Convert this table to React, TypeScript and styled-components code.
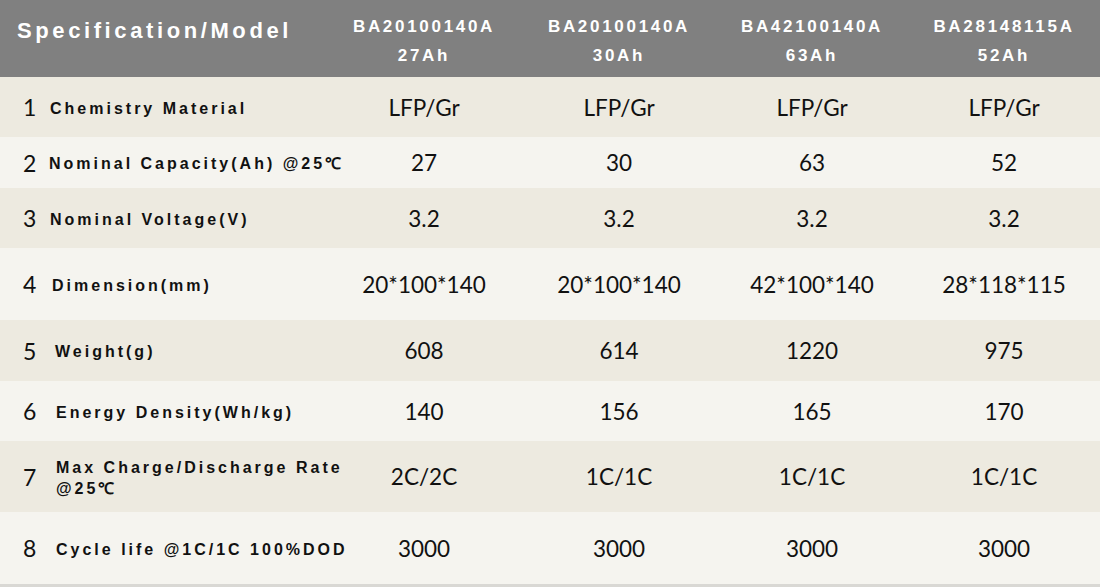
import styled, { createGlobalStyle } from 'styled-components';

const GlobalStyle = createGlobalStyle`
  html, body {
    margin: 0;
    padding: 0;
    background: #f5f4ef;
  }
`;

const COLS = '326px 196px 194px 192px 192px';

const Table = styled.div`
  width: 1100px;
  height: 587px;
  display: flex;
  flex-direction: column;
  border-bottom: 3px solid #d9d8d4;
  box-sizing: border-box;
  overflow: hidden;
`;

const HeaderRow = styled.div`
  display: grid;
  grid-template-columns: ${COLS};
  height: 77px;
  background: #808080;
  color: #ffffff;
  font-family: 'Liberation Sans', Arial, sans-serif;
  font-weight: 700;
`;

const HeaderTitle = styled.div`
  font-size: 22px;
  letter-spacing: 3.6px;
  padding: 18px 0 0 17px;
  white-space: nowrap;
`;

const HeaderModel = styled.div`
  display: flex;
  flex-direction: column;
  align-items: center;
  font-size: 17px;
  letter-spacing: 2.7px;
  line-height: 29px;
  padding-top: 12px;
  white-space: nowrap;
`;

const Row = styled.div<{ $shade: boolean; $height: number }>`
  display: grid;
  grid-template-columns: ${COLS};
  height: ${(p) => p.$height}px;
  background: ${(p) => (p.$shade ? '#edeae0' : '#f5f4ef')};
  align-items: center;
  color: #111111;
`;

const LabelCell = styled.div`
  display: flex;
  align-items: center;
  padding-left: 23px;
`;

const Num = styled.span`
  font-family: Lato, 'Noto Sans', sans-serif;
  font-size: 23px;
  width: 25px;
  flex: none;
`;

const Label = styled.span<{ $indent: number }>`
  font-family: 'Liberation Sans', Arial, sans-serif;
  font-weight: 700;
  font-size: 16px;
  letter-spacing: 3px;
  line-height: 21px;
  margin-left: ${(p) => p.$indent}px;
  margin-top: 2px;
  white-space: nowrap;
`;

const Value = styled.div`
  font-family: Lato, 'Noto Sans', sans-serif;
  font-size: 22.5px;
  text-align: center;
`;

interface Spec {
  label: string[];
  values: string[];
  height: number;
  indent: number;
}

const models = [
  { name: 'BA20100140A', cap: '27Ah' },
  { name: 'BA20100140A', cap: '30Ah' },
  { name: 'BA42100140A', cap: '63Ah' },
  { name: 'BA28148115A', cap: '52Ah' },
];

const specs: Spec[] = [
  { label: ['Chemistry Material'], values: ['LFP/Gr', 'LFP/Gr', 'LFP/Gr', 'LFP/Gr'], height: 60, indent: 2 },
  { label: ['Nominal Capacity(Ah) @25℃'], values: ['27', '30', '63', '52'], height: 51, indent: 1 },
  { label: ['Nominal Voltage(V)'], values: ['3.2', '3.2', '3.2', '3.2'], height: 60, indent: 2 },
  { label: ['Dimension(mm)'], values: ['20*100*140', '20*100*140', '42*100*140', '28*118*115'], height: 72, indent: 4 },
  { label: ['Weight(g)'], values: ['608', '614', '1220', '975'], height: 61, indent: 7 },
  { label: ['Energy Density(Wh/kg)'], values: ['140', '156', '165', '170'], height: 60, indent: 8 },
  { label: ['Max Charge/Discharge Rate', '@25℃'], values: ['2C/2C', '1C/1C', '1C/1C', '1C/1C'], height: 71, indent: 8 },
  { label: ['Cycle life @1C/1C 100%DOD'], values: ['3000', '3000', '3000', '3000'], height: 72, indent: 8 },
];

const App = () => {
  return (
    <>
      <GlobalStyle />
      <Table>
        <HeaderRow>
          <HeaderTitle>Specification/Model</HeaderTitle>
          {models.map((m, i) => (
            <HeaderModel key={i}>
              <span>{m.name}</span>
              <span>{m.cap}</span>
            </HeaderModel>
          ))}
        </HeaderRow>
        {specs.map((s, i) => (
          <Row key={i} $shade={i % 2 === 0} $height={s.height}>
            <LabelCell>
              <Num>{i + 1}</Num>
              <Label $indent={s.indent}>
                {s.label.map((line, j) => (
                  <div key={j}>{line}</div>
                ))}
              </Label>
            </LabelCell>
            {s.values.map((v, j) => (
              <Value key={j}>{v}</Value>
            ))}
          </Row>
        ))}
      </Table>
    </>
  );
};

export default App;
